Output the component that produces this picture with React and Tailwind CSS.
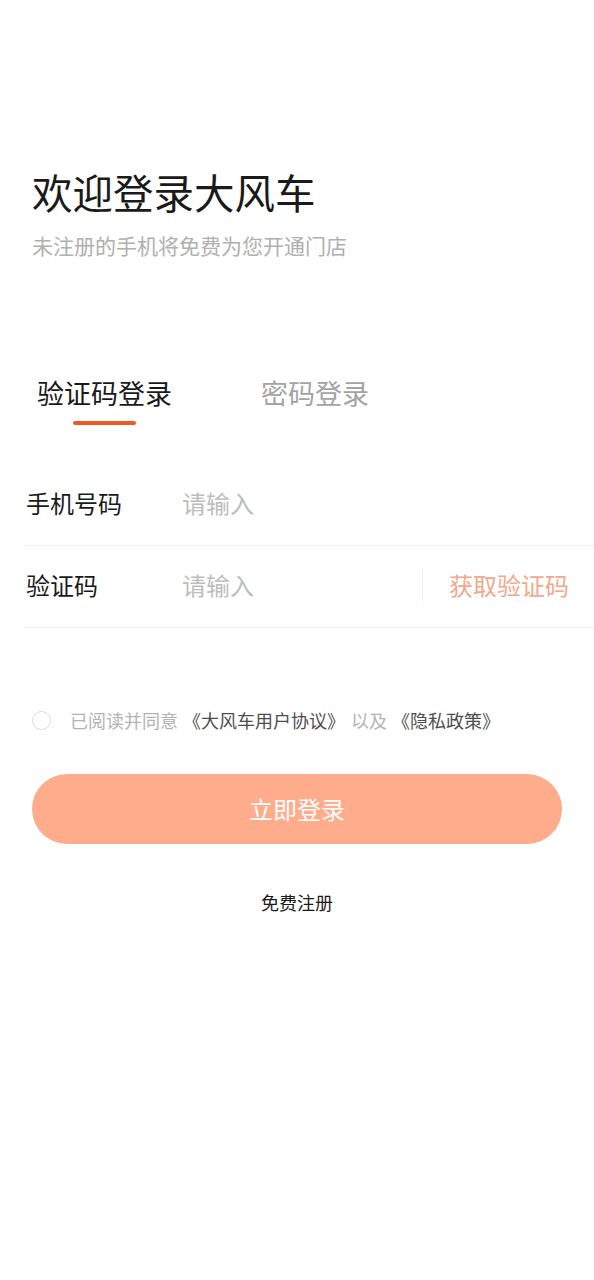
import React, { useState } from 'react';

const font = { fontFamily: '"Noto Sans CJK SC", "Noto Sans", sans-serif' };

function FieldRow({ label, placeholder, children }) {
  return (
    <div className="ml-[24px] flex h-[82px] items-center border-b border-[#f1f1f1] pb-[3px] pl-[2px]">
      <span className="w-[156px] shrink-0 text-[24px] leading-[32px] text-[#1a1a1a]">{label}</span>
      <input
        className="min-w-0 flex-1 bg-transparent text-[24px] leading-[32px] text-[#1a1a1a] outline-none placeholder:text-[#bdbdbd]"
        placeholder={placeholder}
      />
      {children}
    </div>
  );
}

export default function App() {
  const [tab, setTab] = useState(0);
  const [agreed, setAgreed] = useState(false);

  return (
    <div className="min-h-[1280px] w-full bg-white" style={font}>
      <div className="px-[32px] pt-[168px]">
        <h1 className="text-[40.5px] leading-[48px] font-normal text-[#1a1a1a]">欢迎登录大风车</h1>
        <p className="mt-[15px] text-[21px] leading-[28px] text-[#b0b0b0]">未注册的手机将免费为您开通门店</p>
      </div>

      <div className="ml-[37px] mt-[116px] flex gap-[89px]">
        {['验证码登录', '密码登录'].map((t, i) => (
          <button key={t} onClick={() => setTab(i)} className="flex flex-col items-center">
            <span
              className={`text-[27px] leading-[36px] ${tab === i ? 'text-[#1a1a1a]' : 'text-[#a3a3a3]'}`}
            >
              {t}
            </span>
            <span
              className={`mt-[10px] h-[4px] w-[63px] rounded-full ${tab === i ? 'bg-[#f05a22]' : 'bg-transparent'}`}
            />
          </button>
        ))}
      </div>

      <div className="mt-[39px]">
        <FieldRow label="手机号码" placeholder="请输入" />
        <FieldRow label={tab === 0 ? '验证码' : '密码'} placeholder="请输入">
          {tab === 0 && (
            <div className="flex items-center">
              <span className="h-[34px] w-px bg-[#efefef]" />
              <button className="ml-[26px] mr-[25px] text-[24px] leading-[32px] text-[#f1a98b]">获取验证码</button>
            </div>
          )}
        </FieldRow>
      </div>

      <div className="ml-[32px] mt-[80px] flex items-center">
        <button
          onClick={() => setAgreed(!agreed)}
          className={`h-[19px] w-[19px] shrink-0 rounded-full border ${agreed ? 'border-[#f05a22] bg-[#f05a22]' : 'border-[#dcdcdc]'}`}
        />
        <p className="ml-[19px] text-[18px] leading-[24px] text-[#b3b3b3] whitespace-nowrap">
          已阅读并同意<span className="ml-[5px] text-[#4d4d4d]">《大风车用户协议》</span>
          <span className="ml-[6px]">以及</span>
          <span className="ml-[5px] text-[#4d4d4d]">《隐私政策》</span>
        </p>
      </div>

      <div className="mt-[42px] px-[32px]">
        <button className="flex h-[70px] w-full items-center justify-center rounded-full bg-[#ffac8c] text-[24px] leading-[32px] text-white">
          立即登录
        </button>
      </div>

      <div className="mt-[46px] text-center text-[18px] leading-[24px] text-[#1a1a1a]">免费注册</div>
    </div>
  );
}
